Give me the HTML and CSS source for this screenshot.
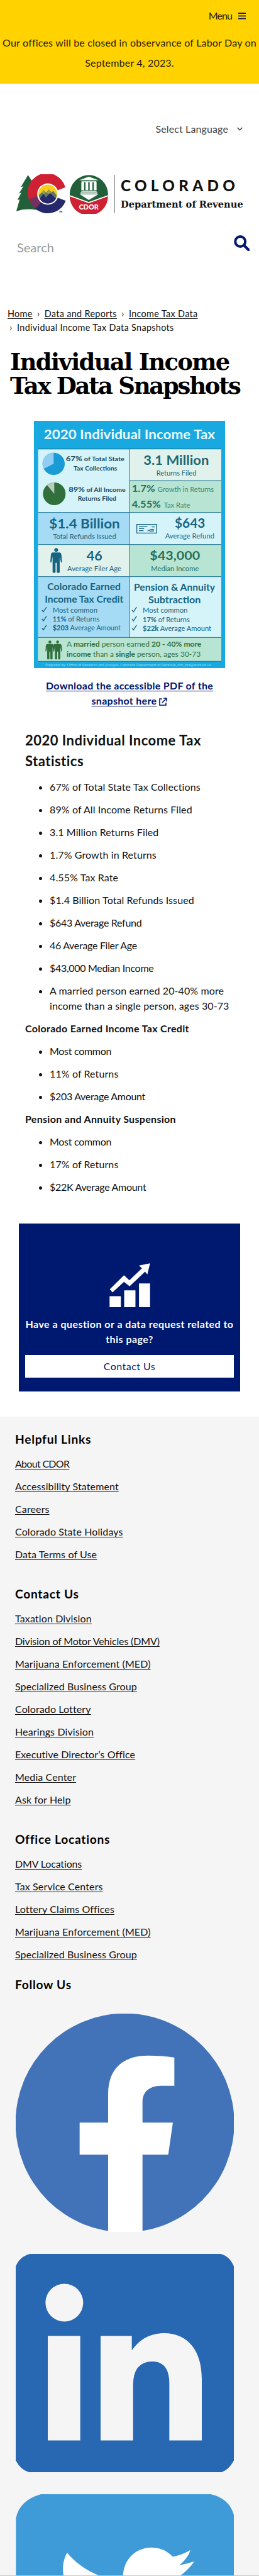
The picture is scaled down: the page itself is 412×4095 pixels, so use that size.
FILE: index.html
```html
<!DOCTYPE html>
<html lang="en">
<head>
<meta charset="utf-8">
<title>Individual Income Tax Data Snapshots</title>
<link rel="stylesheet" href="styles.css">
</head>
<body>
<header>
  <div class="alert">
    <div class="menu"><span>Menu</span>
      <svg class="menu-icon" viewBox="0 0 12 11"><path d="M0 1.2h12M0 5.4h12M0 9.6h12" stroke="#1a1a4a" stroke-width="1.8"/></svg>
    </div>
    <p class="notice">Our offices will be closed in observance of Labor Day on<br>September 4, 2023.</p>
  </div>
  <div class="language"><span>Select Language</span>
    <svg class="chevron" viewBox="0 0 9 6"><path d="M.7.9 4.5 4.7 8.3.9" fill="none" stroke="#444" stroke-width="1.5"/></svg>
  </div>
  <svg class="logo" viewBox="75 830 1092 190" role="img" aria-label="Colorado Department of Revenue">
    <path d="M131 834 97 891 109 888 88 922 99 919 80 954 91 951 75 1007Q120 992 172 1001L205 925 165 885Z" fill="#22603a"/>
    <path d="M226 925 310 893A92 92 0 1 0 144 967L184 953Z" fill="#cf2034"/>
    <path d="M226 925 183 953 165 994A92 92 0 0 0 312 957Z" fill="#25286b"/>
    <path d="M226 925 180 930 138 950Q145 978 168 994Z" fill="#74305f"/>
    <path d="M280 905 320 890V960L280 944Z" fill="#fff"/>
    <circle cx="226" cy="925" r="51" fill="#fff"/>
    <circle cx="226" cy="925" r="45" fill="#f9cd1b"/>
    <path d="M183 931 207 906 218 918 231 903 244 917 252 910 269 931Q265 968 226 970 188 968 183 931Z" fill="#5b7a6c"/>
    <path d="M187 947 205 924 218 942 235 918 265 947Q252 970 226 970 200 970 187 947Z" fill="#25286b"/>
    <path d="M196 918 207 906 216 917 207 925ZM220 918 231 903 243 917 231 926Z" fill="#a39a47"/>
    <text x="280" y="1014" class="tm">TM</text>
    <circle cx="423" cy="926" r="92" fill="#22603a"/>
    <path d="M331 935 423 968 515 935A92 92 0 0 1 331 935Z" fill="#cf2034"/>
    <path d="M331 933 423 966 515 933" fill="none" stroke="#fff" stroke-width="5"/>
    <path d="M423 841 469 859H377ZM388 864H459V868H388ZM387 868h13v38h-13zM407 868h13v38h-13zM427 868h13v38h-13zM447 868h13v38h-13zM387 909h73v5h-73zM383 917h81v6h-81zM379 926h90l-46 28z" fill="#fff"/>
    <text x="375" y="998" class="cdor" textLength="95" lengthAdjust="spacingAndGlyphs">CDOR</text>
    <path d="M546 834V1016" stroke="#888" stroke-width="4"/>
    <text x="576" y="911" class="state" textLength="548">COLORADO</text>
    <text x="576" y="990" class="dept" textLength="587" lengthAdjust="spacingAndGlyphs">Department of Revenue</text>
  </svg>
  <div class="search"><span>Search</span>
    <svg class="search-icon" viewBox="0 0 25 25"><circle cx="10.2" cy="10" r="8" fill="none" stroke="#001970" stroke-width="4"/><path d="m16 16 7.2 7" stroke="#001970" stroke-width="4.4" stroke-linecap="round"/></svg>
  </div>
</header>
<main>
  <nav class="crumbs"><a>Home</a><i>›</i><a>Data and Reports</a><i>›</i><a>Income Tax Data</a><br><i class="lead">›</i><span>Individual Income Tax Data Snapshots</span></nav>
  <h1><span class="t1">Individual Income</span><br><span class="t2">Tax Data Snapshots</span></h1>
  <svg class="infographic" viewBox="42 42 912 1179" preserveAspectRatio="none">
    <defs>
      <g id="person"><circle cx="0" cy="9" r="9"/><path d="M-17 21H17Q24 22 25 31L28 64Q28 69 23 69L17 40V114Q17 118 11 118H8Q3 118 3 114V70H-3V114Q-3 118-8 118H-11Q-17 118-17 114V40L-23 69Q-28 69-28 64L-25 31Q-24 22-17 21Z"/></g>
    </defs>
    <path d="M42 42H954V1221H42Z" fill="#19a9e1"/>
    <path d="M62 178H936V1189H62Z" fill="#d5f4fa"/>
    <path d="M498 178H936V327H498ZM62 632H498V785H62Z" fill="#e1f1ec"/>
    <path d="M498 327H936V479H498ZM498 632H936V785H498ZM62 1075H936V1189H62Z" fill="#b7e4d3"/>
    <path d="M62 479H498V632H62ZM62 785H498V1075H62Z" fill="#a5dbf4"/>
    <path d="M62 176H936M498 327H936M62 479H936M62 632H936M62 785H936M62 1075H936M62 1189H936M498 176V1075" stroke="#1d7190" stroke-width="3" fill="none"/>
    <text class="b" fill="#e9fbff" font-size="61" x="89" y="130" textLength="817" lengthAdjust="spacingAndGlyphs">2020 Individual Income Tax</text>
    <circle cx="136" cy="247" r="53" fill="#199bd5"/><path d="M136 247V194A53 53 0 0 0 89 271Z" fill="#90cdf2"/>
    <circle cx="139" cy="390" r="54" fill="#316f3d"/><path d="M139 390V336A54 54 0 0 0 105 349Z" fill="#b9cbbf"/>
    <g fill="#17465a">
      <text x="194" y="235" font-size="29" class="b" textLength="280" lengthAdjust="spacingAndGlyphs"><tspan font-size="35">67%</tspan> of Total State</text>
      <text x="231" y="278" font-size="29" class="b" textLength="208" lengthAdjust="spacingAndGlyphs">Tax Collections</text>
      <text x="208" y="382" font-size="29" class="b" textLength="271" lengthAdjust="spacingAndGlyphs"><tspan font-size="35">89%</tspan> of All Income</text>
      <text x="251" y="423" font-size="29" class="b" textLength="184" lengthAdjust="spacingAndGlyphs">Returns Filed</text>
    </g>
    <g fill="#1c6673">
      <text x="565" y="251" font-size="62" class="b" textLength="312" lengthAdjust="spacingAndGlyphs">3.1 Million</text>
      <text x="626" y="303" font-size="34" textLength="191" lengthAdjust="spacingAndGlyphs">Returns Filed</text>
    </g>
    <g fill="#3d8872">
      <text x="509" y="381" font-size="44" fill="#28705a" class="b" textLength="111" lengthAdjust="spacingAndGlyphs">1.7%</text>
      <text x="632" y="381" font-size="33" textLength="268" lengthAdjust="spacingAndGlyphs">Growth in Returns</text>
      <text x="509" y="456" font-size="44" fill="#28705a" class="b" textLength="138" lengthAdjust="spacingAndGlyphs">4.55%</text>
      <text x="662" y="455" font-size="33" textLength="125" lengthAdjust="spacingAndGlyphs">Tax Rate</text>
    </g>
    <g fill="#176482">
      <text x="115" y="556" font-size="64" class="b" textLength="337" lengthAdjust="spacingAndGlyphs">$1.4 Billion</text>
      <text x="133" y="606" font-size="34" textLength="301" lengthAdjust="spacingAndGlyphs">Total Refunds Issued</text>
      <text x="714" y="551" font-size="60" class="b" textLength="145" lengthAdjust="spacingAndGlyphs">$643</text>
      <text x="668" y="602" font-size="34" textLength="235" lengthAdjust="spacingAndGlyphs">Average Refund</text>
      <path d="M533 536H628V577H533ZM543 547h40M543 555h25M604 548h14M543 566h22M584 567l8-4 4 5 18-1M597 560h18" fill="none" stroke="#176482" stroke-width="4"/>
      <use href="#person" x="148" y="649"/>
      <text x="293" y="709" font-size="60" class="b" textLength="75" lengthAdjust="spacingAndGlyphs">46</text>
      <text x="201" y="759" font-size="34" textLength="258" lengthAdjust="spacingAndGlyphs">Average Filer Age</text>
    </g>
    <g fill="#28705a">
      <text x="595" y="706" font-size="58" class="b" textLength="240" lengthAdjust="spacingAndGlyphs">$43,000</text>
      <text x="601" y="758" font-size="34" textLength="228" lengthAdjust="spacingAndGlyphs">Median Income</text>
    </g>
    <g fill="#176482">
      <text x="106" y="850" font-size="47" class="b" textLength="350" lengthAdjust="spacingAndGlyphs">Colorado Earned</text>
      <text x="94" y="910" font-size="47" class="b" textLength="375" lengthAdjust="spacingAndGlyphs">Income Tax Credit</text>
      <text x="519" y="852" font-size="47" class="b" textLength="387" lengthAdjust="spacingAndGlyphs">Pension &amp; Annuity</text>
      <text x="588" y="911" font-size="47" class="b" textLength="250" lengthAdjust="spacingAndGlyphs">Subtraction</text>
      <text x="131" y="956" font-size="33" textLength="214" lengthAdjust="spacingAndGlyphs">Most common</text>
      <text x="131" y="999" font-size="33" textLength="224" lengthAdjust="spacingAndGlyphs"><tspan class="b">11%</tspan> of Returns</text>
      <text x="131" y="1042" font-size="33" textLength="325" lengthAdjust="spacingAndGlyphs"><tspan class="b">$203</tspan> Average Amount</text>
      <text x="561" y="958" font-size="33" textLength="214" lengthAdjust="spacingAndGlyphs">Most common</text>
      <text x="561" y="1001" font-size="33" textLength="224" lengthAdjust="spacingAndGlyphs"><tspan class="b">17%</tspan> of Returns</text>
      <text x="561" y="1044" font-size="33" textLength="327" lengthAdjust="spacingAndGlyphs"><tspan class="b">$22k</tspan> Average Amount</text>
    </g>
    <path d="M80 944l7 9 15-23M80 987l7 9 15-23M80 1030l7 9 15-23M510 944l7 9 15-23M510 987l7 9 15-23M510 1030l7 9 15-23" fill="none" stroke="#176482" stroke-width="4"/>
    <g fill="#316f3d">
      <use href="#person" transform="translate(118 1090) scale(.76)"/><use href="#person" transform="translate(155 1090) scale(.76)"/>
      <text x="198" y="1120" font-size="35" textLength="643" lengthAdjust="spacingAndGlyphs">A <tspan class="b">married</tspan> person earned <tspan class="b">20 - 40% more</tspan></text>
      <text x="198" y="1168" font-size="35" textLength="640" lengthAdjust="spacingAndGlyphs"><tspan class="b">income</tspan> than a <tspan class="b">single</tspan> person, ages 30-73</text>
    </g>
    <text x="96" y="1212" font-size="17" fill="#8fdcf6" textLength="790" lengthAdjust="spacingAndGlyphs">Prepared by: Office of Research and Analysis, Colorado Department of Revenue, dor_ora@state.co.us</text>
  </svg>
  <p class="download"><a>Download the accessible PDF of the<br>snapshot here</a>
    <svg class="external" viewBox="0 0 13 13"><path d="M5 2H1v10h10V8M7 1h5v5M12 1 5 8" fill="none" stroke="#001970" stroke-width="1.6"/></svg></p>
  <section class="stats">
    <h2>2020 Individual Income Tax<br>Statistics</h2>
    <ul>
      <li>67% of Total State Tax Collections</li>
      <li>89% of All Income Returns Filed</li>
      <li>3.1 Million Returns Filed</li>
      <li>1.7% Growth in Returns</li>
      <li>4.55% Tax Rate</li>
      <li>$1.4 Billion Total Refunds Issued</li>
      <li class="tight">$643 Average Refund</li>
      <li class="tight">46 Average Filer Age</li>
      <li class="tight">$43,000 Median Income</li>
      <li>A married person earned 20-40% more<br>income than a single person, ages 30-73</li>
    </ul>
    <h3>Colorado Earned Income Tax Credit</h3>
    <ul>
      <li class="tight">Most common</li>
      <li>11% of Returns</li>
      <li class="tight">$203 Average Amount</li>
    </ul>
    <h3>Pension and Annuity Suspension</h3>
    <ul>
      <li class="tight">Most common</li>
      <li>17% of Returns</li>
      <li class="tight">$22K Average Amount</li>
    </ul>
  </section>
  <section class="card">
    <svg class="chart" viewBox="521 263 194 211"><path d="M521 421h54v53h-54zM591 393h54v81h-54zM662 360h53v114h-53zM715 264 662 274 676 288 616 345 590 321 522 388 535 403 590 353 617 374 691 304 702 317Z" fill="#fff"/></svg>
    <p>Have a question or a data request related to<br>this page?</p>
    <a class="button">Contact Us</a>
  </section>
</main>
<footer>
  <h4>Helpful Links</h4>
  <nav><a class="caps">About CDOR</a><a>Accessibility Statement</a><a>Careers</a><a>Colorado State Holidays</a><a>Data Terms of Use</a></nav>
  <h4>Contact Us</h4>
  <nav><a>Taxation Division</a><a class="tight">Division of Motor Vehicles (DMV)</a><a>Marijuana Enforcement (MED)</a><a>Specialized Business Group</a><a>Colorado Lottery</a><a>Hearings Division</a><a>Executive Director’s Office</a><a>Media Center</a><a>Ask for Help</a></nav>
  <h4>Office Locations</h4>
  <nav class="last"><a class="tight">DMV Locations</a><a>Tax Service Centers</a><a>Lottery Claims Offices</a><a>Marijuana Enforcement (MED)</a><a>Specialized Business Group</a></nav>
  <h4>Follow Us</h4>
  <div class="social">
    <svg class="square" viewBox="75 123 1041 1041"><circle cx="596" cy="644" r="522" fill="#4272b8"/><path d="M516 1164V796H380V643H516V505C516 385 590 323 705 323Q770 323 832 332V467H770C708 467 680 500 680 545V643H825L803 796H680V1164Z" fill="#fff"/></svg>
    <svg class="square" viewBox="75 67 1041 1016" preserveAspectRatio="none"><path d="M143 67H1052Q1096 77 1116 125V1028Q1094 1070 1058 1083H138Q98 1072 75 1028V125Q93 80 143 67Z" fill="#2867b2"/><ellipse cx="307" cy="294" rx="90" ry="88" fill="#f5f5f5"/><path d="M228 448H383V935H228ZM480 448H629V516Q685 436 782 436C900 436 963 520 963 650V935H808V670Q808 568 727 568 635 568 635 680V935H480Z" fill="#f5f5f5"/></svg>
    <svg class="bird" viewBox="75 44 1041 387" preserveAspectRatio="none"><path d="M195 44H1005Q1092 62 1116 142V431H76V158Q93 73 195 44Z" fill="#3f9bd8"/><path d="M303 431Q293 373 320 323Q380 395 470 431ZM587 431C592 350 650 298 725 298Q785 299 824 342 869 334 909 310 896 350 857 382 890 377 927 364 904 399 862 431Z" fill="#fff"/></svg>
  </div>
</footer>
</body>
</html>
```
FILE: styles.css
```css
* { box-sizing: border-box; }
body { margin: 0; width: 412px; height: 4095px; overflow: hidden; background: #fff; color: #111; font: 16px/24px Lato, "Open Sans", sans-serif; }
p, h1, h2, h3, h4, ul { margin: 0; }
svg { display: block; }
a { text-decoration: underline; text-underline-offset: 2px; text-decoration-skip-ink: none; }

.alert { height: 133px; background: #ffd200; color: #2b1d08; padding-top: 13px; }
.menu { display: flex; justify-content: flex-end; align-items: center; height: 24px; padding-right: 21px; gap: 10px; }
.menu span { letter-spacing: -.9px; }
.menu-icon { width: 12px; height: 11px; }
.notice { text-align: center; line-height: 32px; padding-top: 15px; white-space: nowrap; letter-spacing: .19px; }
.language { display: flex; justify-content: flex-end; align-items: center; gap: 14px; height: 24px; margin-top: 60px; padding-right: 26px; color: #444; letter-spacing: .12px; }
.chevron { width: 9px; height: 6px; }
.logo { width: 364px; height: 63px; margin: 60px 0 0 25px; }
.tm { font: 700 10px Lato, sans-serif; }
.cdor { font: 900 33px Lato, sans-serif; fill: #fff; }
.state { font: 900 73px Lato, sans-serif; fill: #111; }
.dept { font: 700 43px "DejaVu Serif", serif; fill: #111; }
.search { display: flex; justify-content: space-between; height: 25px; margin-top: 34px; padding: 0 15px 0 27px; font-size: 20px; color: #999; }
.search span { padding-top: 7px; }
.search-icon { width: 25px; height: 25px; }

.crumbs { margin: 89px 0 0 12px; font-size: 14.4px; line-height: 22px; white-space: nowrap; letter-spacing: .34px; }
.crumbs i { display: inline-block; width: 19px; text-align: center; font-style: normal; }
.crumbs i.lead { width: 15px; padding-right: 4px; }
h1 { margin: 24px 0 0 16px; font: 700 37px/38px "DejaVu Serif", serif; white-space: nowrap; color: #000; }
.t1 { letter-spacing: -1.7px; }
.t2 { letter-spacing: -2.29px; }
.infographic { width: 304px; height: 393px; margin: 37px 0 0 54px; font-family: Lato, sans-serif; }
.b { font-weight: 700; }
.download { margin-top: 16px; text-align: center; font-weight: 700; color: #001970; letter-spacing: .28px; }
.external { display: inline-block; width: 13px; height: 13px; vertical-align: -2px; }

.stats { padding: 34px 0 0 40px; white-space: nowrap; letter-spacing: .1px; }
h2 { font-size: 22px; line-height: 33px; margin-bottom: 13px; letter-spacing: .48px; }
.stats ul { padding-left: 39px; }
.stats li, .stats h3 { font-size: 16px; line-height: 24px; margin-bottom: 12px; }
.stats h3 { letter-spacing: .31px; }
.stats .tight { letter-spacing: -.3px; }
.card { width: 352px; height: 267px; margin: 46px 0 0 30px; padding: 63px 10px 0; background: #001970; color: #fff; text-align: center; white-space: nowrap; font-weight: 700; letter-spacing: .46px; }
.chart { width: 65px; height: 70px; margin: 0 auto 15px; }
.button { display: block; height: 36px; margin-top: 13px; line-height: 36px; background: #fff; color: #001970; font-weight: 400; text-decoration: none; }

footer { margin-top: 40px; height: 1843px; padding: 21px 24px 0; background: #f5f5f5; border-bottom: 1px solid #ffd200; }
footer h4 { font-size: 19.2px; line-height: 29px; margin-bottom: 13px; color: #000; letter-spacing: .72px; }
footer nav { display: flex; flex-direction: column; align-items: flex-start; gap: 12px; margin-bottom: 36px; letter-spacing: .12px; }
footer .tight { letter-spacing: -.15px; }
footer .caps { letter-spacing: -.7px; }
footer nav.last { margin-bottom: 21px; }
.social { display: flex; flex-direction: column; gap: 35px; margin: 32px 0 0 1px; }
.square { width: 347px; height: 347px; }
.bird { width: 347px; height: 129px; }
```
